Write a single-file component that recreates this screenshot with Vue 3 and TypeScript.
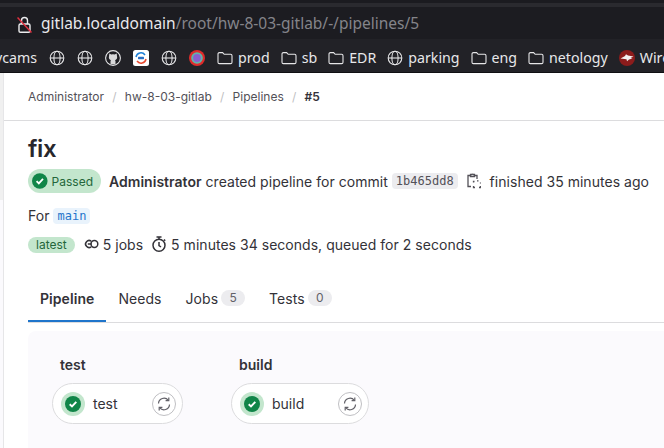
<script setup lang="ts">
const crumbs: string[] = ['Administrator', 'hw-8-03-gitlab', 'Pipelines']
type Mark = { kind: 'globe' | 'github' | 'sync' | 'ring' | 'folder' | 'wire'; label?: string }
const marks: Mark[] = [
  { kind: 'globe' }, { kind: 'globe' }, { kind: 'github' }, { kind: 'sync' }, { kind: 'globe' }, { kind: 'ring' },
  { kind: 'folder', label: 'prod' }, { kind: 'folder', label: 'sb' }, { kind: 'folder', label: 'EDR' },
  { kind: 'globe', label: 'parking' }, { kind: 'folder', label: 'eng' }, { kind: 'folder', label: 'netology' },
  { kind: 'wire', label: 'Wireshark' },
]
const tabs = [
  { name: 'Pipeline', active: true },
  { name: 'Needs' },
  { name: 'Jobs', count: 5 },
  { name: 'Tests', count: 0 },
]
const stages = ['test', 'build']
</script>

<template>
  <div class="page">
    <header class="chrome">
      <div class="strip"></div>
      <div class="address">
        <svg class="lock" width="15" height="18" viewBox="0 0 15 18" fill="none">
          <path d="M4.500 8V4.500a3 3 0 0 1 6 0V8" stroke="#ececee" stroke-width="1.400" />
          <rect x="2" y="8" width="11" height="8.300" rx="1.400" stroke="#ececee" stroke-width="1.400" />
          <path d="M.5 1.500l14 15" stroke="#e0303f" stroke-width="1.500" />
        </svg>
        <span class="url"><span class="host">gitlab.localdomain</span>/root/hw-8-03-gitlab/-/pipelines/5</span>
      </div>
      <nav class="bookmarks">
        <span class="cut">vcams</span>
        <span v-for="(m, i) in marks" :key="i" class="mark">
          <svg v-if="m.kind === 'globe'" width="16" height="16" viewBox="0 0 16 16" fill="none" stroke="#e6e6e8" stroke-width="1.100">
            <circle cx="8" cy="8" r="6.800" /><ellipse cx="8" cy="8" rx="3.100" ry="6.800" /><path d="M1.200 8h13.600" />
          </svg>
          <svg v-else-if="m.kind === 'github'" width="16" height="16" viewBox="0 0 16 16" fill="none">
            <circle cx="8" cy="8" r="7.400" fill="#1e1e23" stroke="#e6e6e8" stroke-width="1.100" />
            <path d="M4 6.300 4.300 3.600l2 1a6 6 0 0 1 3.400 0l2-1 .3 2.700c.5 1.800-.2 3.400-2 3.900.4.4.5.8.5 1.300v2.700H5.500v-2.700c0-.5.1-.9.5-1.300-1.800-.5-2.500-2.100-2-3.900z" fill="#d8d8da" />
          </svg>
          <svg v-else-if="m.kind === 'sync'" width="16" height="16" viewBox="0 0 16 16" fill="none">
            <rect width="16" height="16" rx="2.500" fill="#fff" />
            <path d="M3 7a5 5 0 0 1 9-2" stroke="#1c7fd6" stroke-width="1.500" />
            <path d="M13 9a5 5 0 0 1-9 2" stroke="#e8492f" stroke-width="1.500" />
            <rect x="5" y="6.800" width="6" height="2.400" rx=".6" fill="#2a6fc4" />
          </svg>
          <svg v-else-if="m.kind === 'ring'" width="16" height="16" viewBox="0 0 16 16">
            <circle cx="8" cy="8" r="8" fill="#e02b2b" /><circle cx="8" cy="8" r="5.800" fill="#5fb7a8" /><circle cx="8" cy="8" r="3.900" fill="#8a5fd0" />
          </svg>
          <svg v-else-if="m.kind === 'folder'" width="16" height="14" viewBox="0 0 16 14" fill="none" stroke="#e6e6e8" stroke-width="1.100">
            <path d="M1 3a1.400 1.400 0 0 1 1.400-1.400h3.200l1.600 1.700h6.400A1.400 1.400 0 0 1 15 4.700v6.500a1.400 1.400 0 0 1-1.400 1.400H2.400A1.400 1.400 0 0 1 1 11.200z" />
          </svg>
          <svg v-else width="16" height="16" viewBox="0 0 16 16">
            <circle cx="8" cy="8" r="8" fill="#8c1c1c" />
            <path d="M1.500 8.500 6 6l1-1.800 2 1.300 5.500 1-3 1.500 2 .5-3.500 1-2 1.800-.5-2z" fill="#f3f0f0" />
          </svg>
          <span v-if="m.label">{{ m.label }}</span>
        </span>
      </nav>
    </header>

    <div class="body">
      <aside class="rail"></aside>
      <main class="main">
        <div class="crumb-bar">
          <template v-for="c in crumbs" :key="c">
            <span class="crumb">{{ c }}</span><span class="sep">/</span>
          </template>
          <strong class="crumb-now">#5</strong>
        </div>

        <div class="content">
          <h1 class="title">fix</h1>

          <div class="line status-line">
            <span class="passed">
              <svg class="check" width="16" height="16" viewBox="0 0 16 16">
                <circle cx="8" cy="8" r="8" fill="#108548" />
                <path d="M4.700 8.200 7 10.400l4.300-4.500" fill="none" stroke="#fff" stroke-width="1.900" />
              </svg>
              Passed
            </span>
            <span class="sentence"><b>Administrator</b> created pipeline for commit</span>
            <code class="sha">1b465dd8</code>
            <svg class="copy" width="14" height="16" viewBox="0 0 14 16" fill="none" stroke="#535158" stroke-width="1.300">
              <path d="M3 2.500H1v11h3M8 2.500h2V6" />
              <path d="M3.500 3.500V1.500h1.200a1 1 0 0 1 1.600 0h1.200v2z" />
              <path d="M6.500 9.500v-1h1M10 7.800h1.500M13.500 9.500v1M13.500 13v1.500h-1.500M8 14.500H6.500V13" />
            </svg>
            <span class="finished">finished 35 minutes ago</span>
          </div>

          <div class="line for-line">
            <span class="for">For</span>
            <code class="ref">main</code>
          </div>

          <div class="line meta-line">
            <span class="latest">latest</span>
            <svg class="jobs-ico" width="16" height="16" viewBox="0 0 16 16" fill="none" stroke="#333238" stroke-width="1.500">
              <circle cx="11.400" cy="8" r="3.400" />
              <path d="M8.200 5.200a3.500 3.500 0 1 0 0 5.600" />
              <path d="M4.800 8h3.800" />
            </svg>
            <span>5 jobs</span>
            <svg class="timer" width="16" height="16" viewBox="0 0 16 16" fill="none" stroke="#333238" stroke-width="1.500">
              <circle cx="8" cy="9.200" r="6" />
              <path d="M5.500 1h5M8 1v2M8 6v3.500l2 1.500M13 3.500l1.200 1.200" />
            </svg>
            <span>5 minutes 34 seconds, queued for 2 seconds</span>
          </div>

          <div class="tabs">
            <span v-for="t in tabs" :key="t.name" class="tab" :class="{ active: t.active }">
              {{ t.name }}
              <span v-if="t.count !== undefined" class="count">{{ t.count }}</span>
            </span>
          </div>

          <section class="graph">
            <div v-for="s in stages" :key="s" class="stage">
              <div class="stage-name">{{ s }}</div>
              <div class="job">
                <span class="halo">
                  <svg width="16" height="16" viewBox="0 0 16 16">
                    <circle cx="8" cy="8" r="8" fill="#108548" />
                    <path d="M4.700 8.200 7 10.400l4.300-4.500" fill="none" stroke="#fff" stroke-width="1.900" />
                  </svg>
                </span>
                <span class="job-name">{{ s }}</span>
                <span class="retry">
                  <svg width="16" height="16" viewBox="0 0 16 16" fill="none" stroke="#626168" stroke-width="1.200">
                    <path d="M2.500 7.500a5.500 5.500 0 0 1 9.800-3.200M13.500 8.500a5.500 5.500 0 0 1-9.800 3.200" />
                    <path d="M12.800 1.500v3.200H9.600M3.200 14.500v-3.200h3.200" />
                  </svg>
                </span>
              </div>
            </div>
          </section>
        </div>
      </main>
    </div>
  </div>
</template>

<style>
html, body { margin: 0; background: #fff; overflow: hidden; }
</style>

<style scoped>
.page { width: 664px; height: 448px; overflow: hidden; font-family: Inter, "Liberation Sans", sans-serif; color: #333238; display: flex; flex-direction: column; }
.chrome { height: 73px; flex: none; background: #222227; box-sizing: border-box; border-bottom: 1px solid #0f0f12; }
.strip { height: 3px; background: #1b1b20; border-bottom: 4px solid #2a2a2f; }
.address { height: 32px; background: #1c1c21; display: flex; align-items: center; padding-left: 17px; gap: 9px; box-sizing: border-box; }
.lock { flex: none; margin-top: 3px; }
.url { font-family: "Noto Sans", "Open Sans", sans-serif; font-size: 15.500px; color: #84848a; white-space: nowrap; }
.host { color: #e9e9ec; }
.bookmarks { height: 33px; padding-top: 4px; box-sizing: border-box; display: flex; align-items: center; font-family: "Noto Sans", "Open Sans", sans-serif; font-size: 14.200px; color: #e8e8ea; white-space: nowrap; margin-left: -5px; }
.cut { margin-right: 12px; }
.mark { display: inline-flex; align-items: center; gap: 5px; margin-right: 12px; }
.mark:nth-child(n+8) { margin-right: 11px; }
.mark svg { flex: none; }
.body { flex: 1; display: flex; min-height: 0; }
.rail { width: 3px; flex: none; background: linear-gradient(#f0f0f0 127px, #fbfafd 127px); border-right: 1px solid #e6e6e8; }
.main { flex: 1; min-width: 0; }
.crumb-bar { height: 48px; box-sizing: border-box; border-bottom: 1px solid #dcdcde; padding-left: 24px; display: flex; align-items: center; font-size: 12px; color: #535158; white-space: nowrap; }
.sep { color: #bfbfc3; margin: 0 8.200px; }
.crumb-now { color: #333238; font-weight: 600; }
.content { padding-left: 24px; }
.title { margin: 13px 0 0; font-size: 24px; line-height: 30px; font-weight: 600; color: #28272d; letter-spacing: -.4px; }
.line { display: flex; align-items: center; font-size: 14px; white-space: nowrap; letter-spacing: .03px; }
.status-line { margin-top: 5px; height: 24px; }
.passed { display: inline-flex; align-items: center; gap: 4px; height: 24px; padding: 0 8px 0 4px; border-radius: 12px; background: #c3e6cd; color: #24663b; font-size: 12px; box-sizing: border-box; width: 73px; letter-spacing: 0; }
.sentence { margin-left: 8px; }
.sentence b { font-weight: 600; }
.sha { margin-left: 4px; font-family: "DejaVu Sans Mono", "Liberation Mono", monospace; font-size: 12px; background: #ececef; color: #535158; padding: 2px 4px; border-radius: 4px; line-height: 12px; letter-spacing: 0; }
.copy { margin-left: 9px; }
.finished { margin-left: 9px; }
.for-line { margin-top: 11px; height: 24px; }
.for { margin-bottom: 1px; }
.ref { margin-left: 4px; font-family: "DejaVu Sans Mono", "Liberation Mono", monospace; font-size: 12px; color: #1f75cb; background: #e9f3fc; padding: 2px 4px; border-radius: 4px; line-height: 12px; letter-spacing: 0; }
.meta-line { margin-top: 4px; height: 24px; }
.latest { background: #c3e6cd; color: #24663b; font-size: 12px; height: 16px; line-height: 16px; padding: 0 8px; border-radius: 8px; letter-spacing: 0; margin-top: 2px; }
.jobs-ico { margin-left: 8px; }
.jobs-ico + span { margin-left: 4px; }
.timer { margin-left: 8px; margin-right: 4px; }
.tabs { margin-top: 20px; height: 47px; box-sizing: border-box; border-bottom: 1px solid #dcdcde; display: flex; font-size: 14px; letter-spacing: .06px; }
.tab { display: inline-flex; align-items: center; gap: 3px; padding: 0 12px 2px; height: 46px; box-sizing: border-box; white-space: nowrap; }
.tab.active { font-weight: 600; box-shadow: inset 0 -2px 0 #1f75cb; }
.count { font-size: 12px; background: #ececef; color: #626168; width: 24px; height: 16px; line-height: 16px; border-radius: 8px; text-align: center; }
.graph { margin-top: 8px; background: #fbfafd; border-radius: 8px 0 0 0; height: 200px; padding: 24px 24px 0; display: flex; gap: 48px; }
.stage { display: flex; flex-direction: column; }
.stage-name { font-size: 14px; font-weight: 600; padding-left: 8px; line-height: 20px; }
.job { margin-top: 8px; height: 41px; box-sizing: border-box; width: 131px; border: 1px solid #dcdcde; border-radius: 21px; background: #fff; display: flex; align-items: center; padding: 0 6px 0 8px; font-size: 14px; }
.stage:nth-child(2) .job { width: 138px; }
.halo { width: 24px; height: 24px; border-radius: 50%; background: #c3e6cd; display: flex; align-items: center; justify-content: center; flex: none; }
.job-name { margin-left: 8px; flex: 1; }
.retry { width: 24px; height: 24px; box-sizing: border-box; border: 1px solid #bfbfc3; border-radius: 50%; background: #fff; display: flex; align-items: center; justify-content: center; flex: none; }
</style>
